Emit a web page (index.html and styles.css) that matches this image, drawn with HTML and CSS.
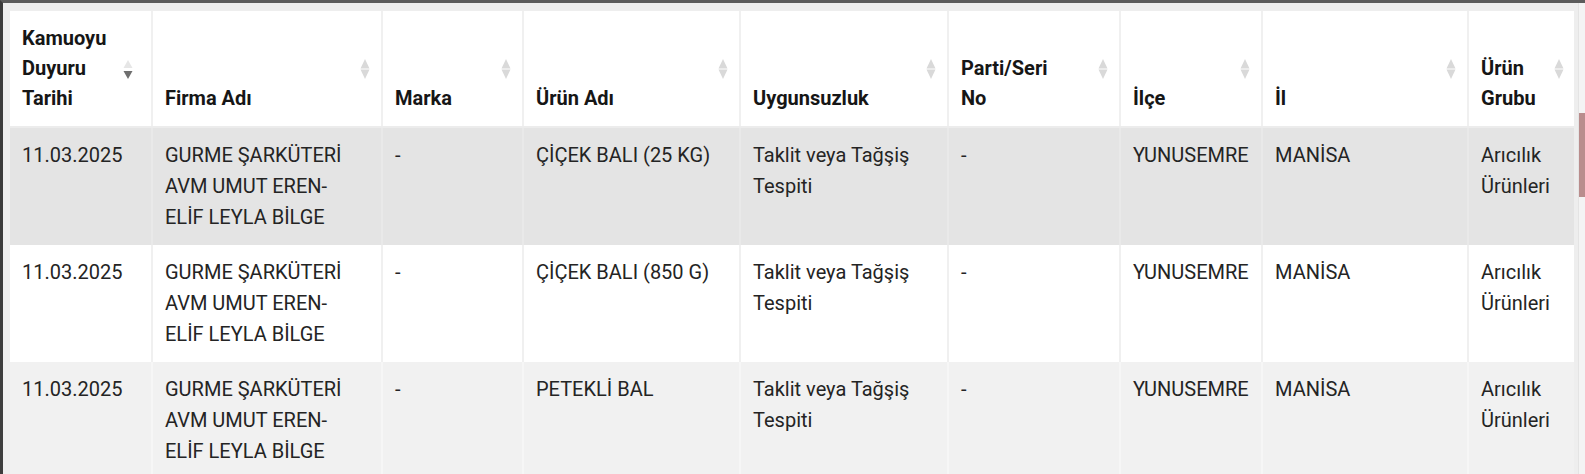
FILE: index.html
```html
<!DOCTYPE html>
<html lang="tr">
<head>
<meta charset="utf-8">
<title>Kamuoyu Duyurusu</title>
<link rel="stylesheet" href="styles.css">
</head>
<body>
<div class="frame">
  <div class="content">
    <table class="grid">
      <colgroup>
        <col class="c1"><col class="c2"><col class="c3"><col class="c4"><col class="c5"><col class="c6"><col class="c7"><col class="c8"><col class="c9">
      </colgroup>
      <thead>
        <tr>
          <th><div class="hd"><span class="lbl">Kamuoyu<br>Duyuru<br>Tarihi</span><span class="sort active"><svg width="10" height="22" viewBox="0 0 10 22"><path d="M5 1 L9.5 9 H0.5 Z" fill="#e6e6e6"/><path d="M0.5 12 H9.5 L5 20 Z" fill="#6f6f6f"/></svg></span></div></th>
          <th><div class="hd"><span class="lbl">Firma Adı</span><span class="sort"><svg width="10" height="22" viewBox="0 0 10 22"><path d="M5 1 L9.5 10.5 H0.5 Z M0.5 11.5 H9.5 L5 21 Z" fill="#d9d9d9"/></svg></span></div></th>
          <th><div class="hd"><span class="lbl">Marka</span><span class="sort"><svg width="10" height="22" viewBox="0 0 10 22"><path d="M5 1 L9.5 10.5 H0.5 Z M0.5 11.5 H9.5 L5 21 Z" fill="#d9d9d9"/></svg></span></div></th>
          <th><div class="hd"><span class="lbl">Ürün Adı</span><span class="sort"><svg width="10" height="22" viewBox="0 0 10 22"><path d="M5 1 L9.5 10.5 H0.5 Z M0.5 11.5 H9.5 L5 21 Z" fill="#d9d9d9"/></svg></span></div></th>
          <th><div class="hd"><span class="lbl">Uygunsuzluk</span><span class="sort"><svg width="10" height="22" viewBox="0 0 10 22"><path d="M5 1 L9.5 10.5 H0.5 Z M0.5 11.5 H9.5 L5 21 Z" fill="#d9d9d9"/></svg></span></div></th>
          <th><div class="hd"><span class="lbl">Parti/Seri<br>No</span><span class="sort"><svg width="10" height="22" viewBox="0 0 10 22"><path d="M5 1 L9.5 10.5 H0.5 Z M0.5 11.5 H9.5 L5 21 Z" fill="#d9d9d9"/></svg></span></div></th>
          <th><div class="hd"><span class="lbl">İlçe</span><span class="sort"><svg width="10" height="22" viewBox="0 0 10 22"><path d="M5 1 L9.5 10.5 H0.5 Z M0.5 11.5 H9.5 L5 21 Z" fill="#d9d9d9"/></svg></span></div></th>
          <th><div class="hd"><span class="lbl">İl</span><span class="sort"><svg width="10" height="22" viewBox="0 0 10 22"><path d="M5 1 L9.5 10.5 H0.5 Z M0.5 11.5 H9.5 L5 21 Z" fill="#d9d9d9"/></svg></span></div></th>
          <th><div class="hd"><span class="lbl">Ürün<br>Grubu</span><span class="sort"><svg width="10" height="22" viewBox="0 0 10 22"><path d="M5 1 L9.5 10.5 H0.5 Z M0.5 11.5 H9.5 L5 21 Z" fill="#d9d9d9"/></svg></span></div></th>
        </tr>
      </thead>
      <tbody>
        <tr class="row-hover">
          <td>11.03.2025</td>
          <td>GURME ŞARKÜTERİ AVM UMUT EREN-ELİF LEYLA BİLGE</td>
          <td>-</td>
          <td>ÇİÇEK BALI (25 KG)</td>
          <td>Taklit veya Tağşiş Tespiti</td>
          <td>-</td>
          <td>YUNUSEMRE</td>
          <td>MANİSA</td>
          <td>Arıcılık Ürünleri</td>
        </tr>
        <tr class="row-plain">
          <td>11.03.2025</td>
          <td>GURME ŞARKÜTERİ AVM UMUT EREN-ELİF LEYLA BİLGE</td>
          <td>-</td>
          <td>ÇİÇEK BALI (850 G)</td>
          <td>Taklit veya Tağşiş Tespiti</td>
          <td>-</td>
          <td>YUNUSEMRE</td>
          <td>MANİSA</td>
          <td>Arıcılık Ürünleri</td>
        </tr>
        <tr class="row-striped">
          <td>11.03.2025</td>
          <td>GURME ŞARKÜTERİ AVM UMUT EREN-ELİF LEYLA BİLGE</td>
          <td>-</td>
          <td>PETEKLİ BAL</td>
          <td>Taklit veya Tağşiş Tespiti</td>
          <td>-</td>
          <td>YUNUSEMRE</td>
          <td>MANİSA</td>
          <td>Arıcılık Ürünleri</td>
        </tr>
      </tbody>
    </table>
  </div>
  <div class="scrollbar"><div class="thumb"></div></div>
</div>
</body>
</html>
```

FILE: styles.css
```css
html, body {
  margin: 0;
  padding: 0;
  height: 474px;
  overflow: hidden;
}
body {
  background: #efefef;
  font-family: Roboto, "Liberation Sans", Arial, sans-serif;
  color: #222;
}
.frame {
  display: flex;
  height: 474px;
  box-sizing: border-box;
  border-top: 3px solid #5c5c5c;
  border-left: 3px solid #3c3c3c;
  background: #eeeeee;
}
.content {
  flex: 1;
  padding: 8px 0 0 7px;
  overflow: hidden;
}
.scrollbar {
  width: 6px;
  margin-left: 4px;
  padding-top: 110px;
  background: #f4f4f4;
  border-left: 1px solid #e4e4e4;
}
.thumb {
  height: 84px;
  background: #b98d8d;
}
.grid {
  width: 1565px;
  table-layout: fixed;
  border-collapse: collapse;
  font-size: 20px;
}
.c1 { width: 142px; }
.c2 { width: 230px; }
.c3 { width: 141px; }
.c4 { width: 217px; }
.c5 { width: 208px; }
.c6 { width: 172px; }
.c7 { width: 142px; }
.c8 { width: 206px; }
.c9 { width: 107px; }
th, td {
  border-left: 2px solid #f0f0f0;
  text-align: left;
  vertical-align: top;
}
th:first-child, td:first-child {
  border-left: none;
}
th {
  background: #ffffff;
  padding: 12px 11px 13px 12px;
  font-weight: 700;
  color: #161616;
  line-height: 30px;
  border-bottom: 2px solid #ececec;
}
.hd {
  display: flex;
  height: 90px;
  align-items: flex-end;
  justify-content: space-between;
}
.lbl {
  display: block;
}
.sort {
  align-self: center;
  display: flex;
  width: 10px;
  height: 22px;
  margin-top: 1px;
}
.sort.active {
  margin-right: 7px;
  margin-top: 4px;
}
td {
  padding: 12px 18px 12px 12px;
  line-height: 31px;
  height: 93px;
  color: #242424;
}
.row-hover td {
  background: #e4e4e4;
  border-left-color: #e9e9e9;
}
.row-plain td {
  background: #ffffff;
}
.row-striped td {
  background: #f1f1f1;
  border-left-color: #f6f6f6;
}
```
